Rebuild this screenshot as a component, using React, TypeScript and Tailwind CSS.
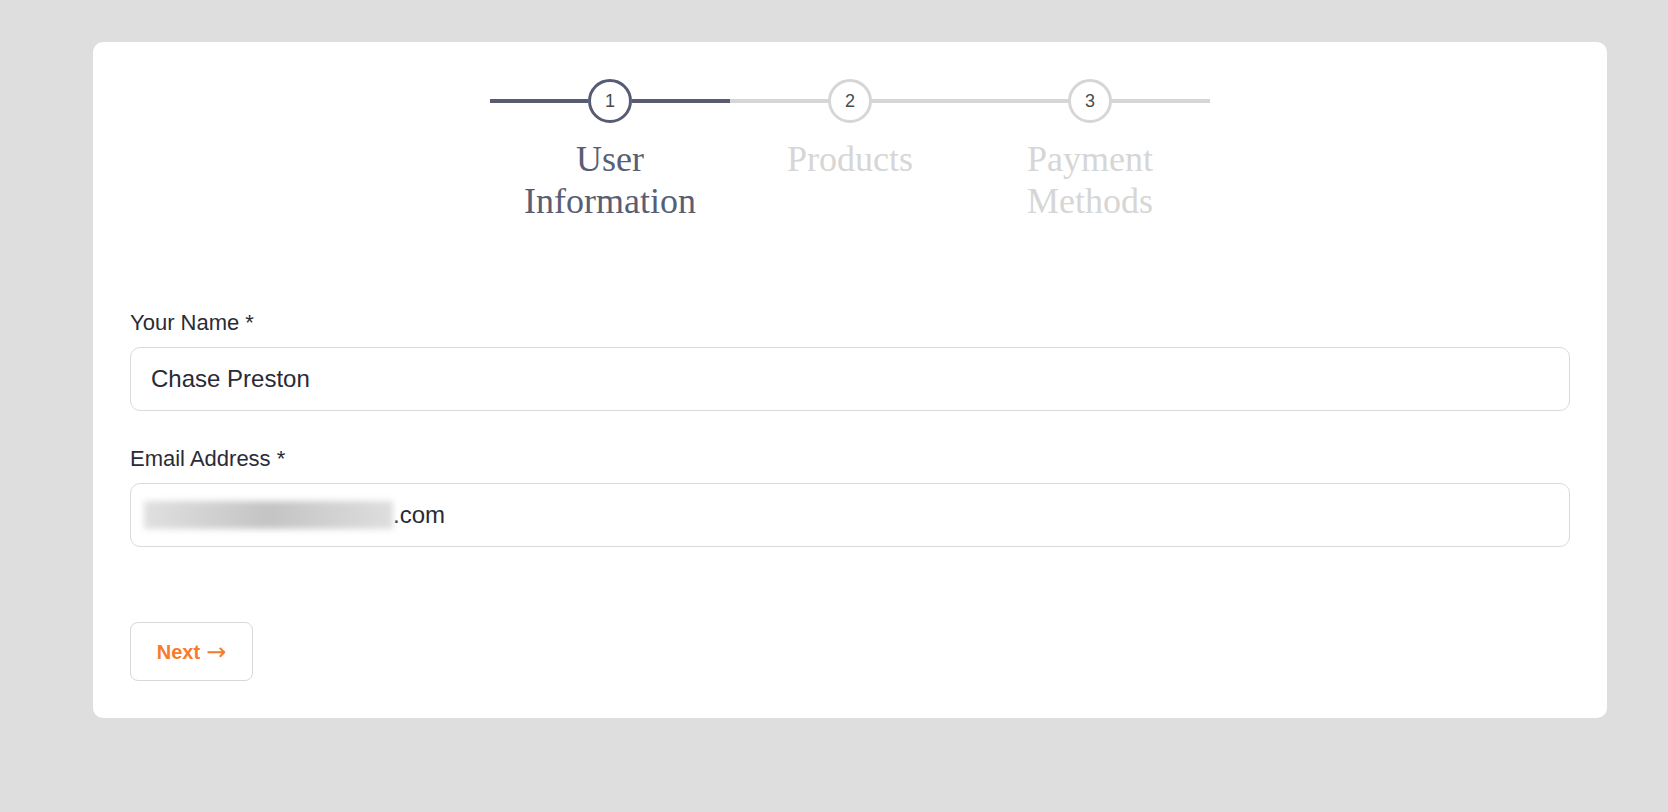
const steps = [
    { n: 1, label: 'User Information', active: true },
    { n: 2, label: 'Products', active: false },
    { n: 3, label: 'Payment Methods', active: false },
]

function Step({ n, label, active }: { n: number; label: string; active: boolean }) {
    const line = active ? 'bg-[#585c73]' : 'bg-[#d6d6d6]'
    return (
        <div className="flex w-[240px] flex-col items-center">
            <div className="flex w-full items-center">
                <div className={`h-[4px] flex-1 ${line}`}></div>
                <div
                    className={`flex h-[44px] w-[44px] items-center justify-center rounded-full border-[3px] bg-white text-[18px] text-[#4a4a4a] ${active ? 'border-[#585c73]' : 'border-[#d6d6d6]'}`}
                    style={{ fontFamily: '"Liberation Sans", Arial, sans-serif' }}
                >
                    {n}
                </div>
                <div className={`h-[4px] flex-1 ${line}`}></div>
            </div>
            <div
                className={`mt-[16px] px-[20px] text-center text-[36px] leading-[41.5px] ${active ? 'text-[#5a5e75]' : 'text-[#d6d6d6]'}`}
                style={{ fontFamily: '"Liberation Serif", "Times New Roman", serif' }}
            >
                {label}
            </div>
        </div>
    )
}

export default function App() {
    return (
        <div className="min-h-screen bg-[#dedede] pt-[42px]" style={{ fontFamily: '"Liberation Sans", Arial, sans-serif' }}>
            <div className="ml-[93px] w-[1514px] rounded-[10px] bg-white p-[37px]">
                <div className="flex justify-center">
                    {steps.map(s => <Step key={s.n} {...s} />)}
                </div>

                <div className="mt-[84px]">
                    <div className="mb-[8px] text-[22px] leading-[33px] text-[#2b2b38]">Your Name *</div>
                    <div className="flex h-[64px] items-center rounded-[10px] border border-[#dadade] px-[20px] text-[24px] text-[#2a2a35]">
                        Chase Preston
                    </div>

                    <div className="mb-[8px] mt-[31px] text-[22px] leading-[33px] text-[#2b2b38]">Email Address *</div>
                    <div className="flex h-[64px] items-center rounded-[10px] border border-[#dadade] pl-[13px] pr-[20px] text-[24px] text-[#2a2a35]">
                        <span className="h-[28px] w-[249px] bg-gradient-to-r from-[#e0e0e0] via-[#c4c4c4] to-[#dedede] blur-[3px]"></span>
                        <span>.com</span>
                    </div>
                </div>

                <button className="mt-[75px] flex h-[59px] w-[123px] items-center justify-center gap-[6px] rounded-[8px] border border-[#d8d8d8] bg-white text-[20px] font-bold text-[#f77b2c]">
                    <span>Next</span>
                    <span className="text-[24px] font-normal leading-none" style={{ fontFamily: '"DejaVu Sans", sans-serif' }}>→</span>
                </button>
            </div>
        </div>
    )
}
